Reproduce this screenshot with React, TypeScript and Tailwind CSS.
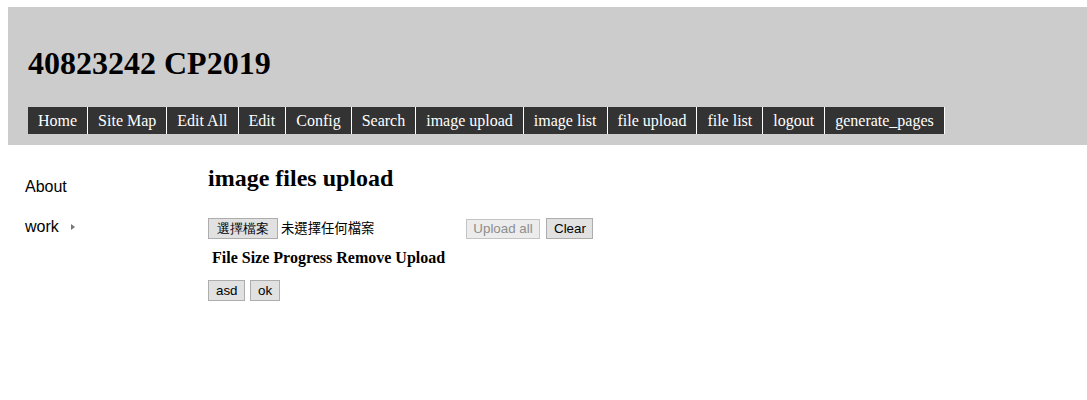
import React from "react";

const navItems = [
  "Home",
  "Site Map",
  "Edit All",
  "Edit",
  "Config",
  "Search",
  "image upload",
  "image list",
  "file upload",
  "file list",
  "logout",
  "generate_pages",
];

const btn =
  "h-[21px] px-[7px] border border-[#adadad] bg-[#e1e1e1] text-[13.33px] leading-none text-black [font-family:'Liberation_Sans',Arial,sans-serif]";

export default function App() {
  return (
    <div className="min-h-[400px] bg-white pt-[7px] pl-[8px] [font-family:'Liberation_Serif','Times_New_Roman',serif]">
      <header className="bg-[#cccccc] h-[138px] pl-[20px] pt-[38px] flex flex-col">
        <h1 className="text-[32px] font-bold leading-[37px] text-black m-0">40823242 CP2019</h1>
        <nav className="mt-[25px] flex">
          {navItems.map((n) => (
            <a
              key={n}
              className="h-[27px] px-[10px] flex items-center bg-[#333333] text-white text-[16px] border-r border-white whitespace-nowrap"
            >
              {n}
            </a>
          ))}
        </nav>
      </header>
      <div className="flex">
        <aside className="w-[200px] pl-[17px] pt-[33px] [font-family:'Liberation_Sans',Arial,sans-serif] text-[16px] text-black">
          <div className="h-[18px] leading-[18px]">About</div>
          <div className="mt-[22px] h-[18px] leading-[18px] flex items-center">
            <span>work</span>
            <span className="ml-[12px] w-0 h-0 border-y-[3.5px] border-y-transparent border-l-[4px] border-l-[#777777]"></span>
          </div>
        </aside>
        <main className="pt-[19px]">
          <h2 className="text-[24px] font-bold leading-[28px] text-black m-0">image files upload</h2>
          <div className="mt-[26px] flex items-center h-[21px]">
            <div className="w-[258px] flex items-center">
              <button className={btn + " px-[8px] [font-family:'Liberation_Sans','Noto_Sans_CJK_TC',sans-serif]"}>選擇檔案</button>
              <span className="ml-[3px] text-[13.33px] text-black [font-family:'Liberation_Sans','Noto_Sans_CJK_TC',sans-serif]">
                未選擇任何檔案
              </span>
            </div>
            <button className="h-[20px] w-[74px] border border-[#c4c4c4] bg-[#ececec] text-[13.33px] leading-none text-[#8d8d8d] [font-family:'Liberation_Sans',Arial,sans-serif]" disabled>
              Upload all
            </button>
            <button className={btn + " ml-[6px] h-[20px] w-[47px] px-0"}>Clear</button>
          </div>
          <div className="mt-[9px] pl-[4px] h-[19px] leading-[19px] text-[16px] font-bold text-black">
            File Size Progress Remove Upload
          </div>
          <div className="mt-[13px] flex gap-[5px]">
            <button className={btn + " h-[20px] w-[37px] px-0"}>asd</button>
            <button className={btn + " h-[20px] w-[30px] px-0"}>ok</button>
          </div>
        </main>
      </div>
    </div>
  );
}
